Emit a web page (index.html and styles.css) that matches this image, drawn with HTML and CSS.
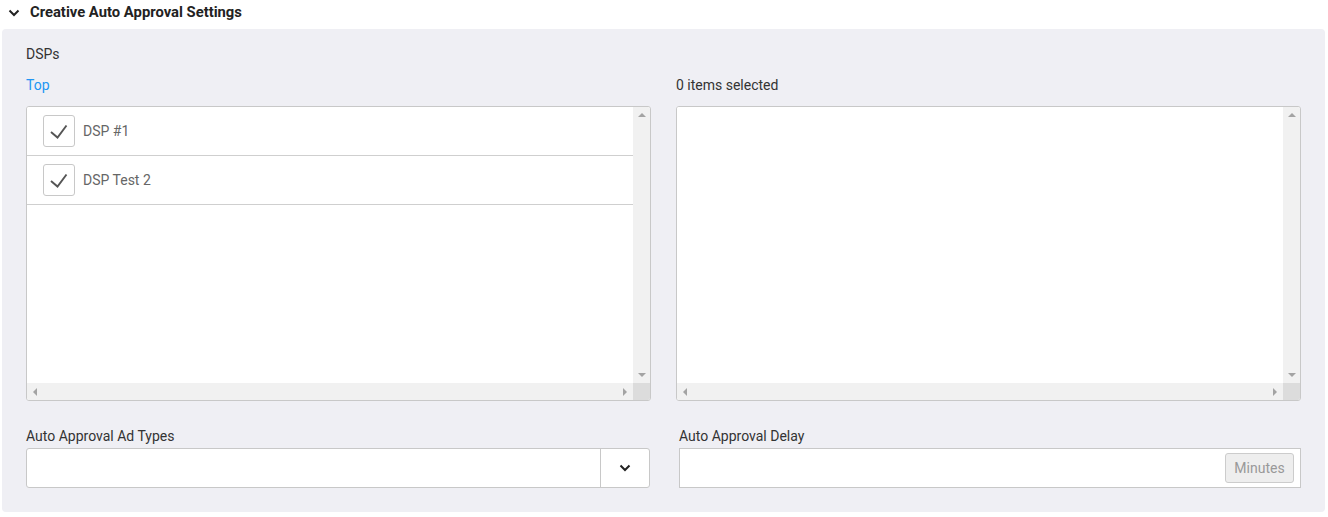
FILE: index.html
```html
<!DOCTYPE html>
<html>
<head>
<meta charset="utf-8">
<link rel="stylesheet" href="styles.css">
</head>
<body>
<div class="section">
  <div class="section-head">
    <svg class="chev" width="12" height="8" viewBox="0 0 12 8"><path d="M1.5 1.5 L6 6 L10.5 1.5" fill="none" stroke="#222" stroke-width="2"/></svg>
    <span class="section-title">Creative Auto Approval Settings</span>
  </div>
  <div class="panel">
    <div class="field-title">DSPs</div>
    <div class="dual">
      <div class="col">
        <div class="col-head link">Top</div>
        <div class="listbox">
          <div class="list-view">
            <div class="row">
              <span class="check"><svg width="32" height="32" viewBox="0 0 32 32"><path d="M8 17 L14.5 22.5 L23.5 10.5" fill="none" stroke="#555" stroke-width="1.9"/></svg></span>
              <span class="row-label">DSP #1</span>
            </div>
            <div class="row">
              <span class="check"><svg width="32" height="32" viewBox="0 0 32 32"><path d="M8 17 L14.5 22.5 L23.5 10.5" fill="none" stroke="#555" stroke-width="1.9"/></svg></span>
              <span class="row-label">DSP Test 2</span>
            </div>
          </div>
          <div class="vbar"><span class="arr up"></span><span class="arr down"></span></div>
          <div class="hbar"><span class="arr left"></span><span class="arr right"></span></div>
          <div class="corner"></div>
        </div>
      </div>
      <div class="col">
        <div class="col-head">0 items selected</div>
        <div class="listbox">
          <div class="list-view"></div>
          <div class="vbar"><span class="arr up"></span><span class="arr down"></span></div>
          <div class="hbar"><span class="arr left"></span><span class="arr right"></span></div>
          <div class="corner"></div>
        </div>
      </div>
    </div>
    <div class="bottom">
      <div class="bcol left">
        <div class="label">Auto Approval Ad Types</div>
        <div class="select">
          <div class="select-value"></div>
          <div class="select-btn"><svg width="12" height="8" viewBox="0 0 12 8"><path d="M1.5 1.5 L6 6 L10.5 1.5" fill="none" stroke="#222" stroke-width="2"/></svg></div>
        </div>
      </div>
      <div class="bcol right">
        <div class="label">Auto Approval Delay</div>
        <div class="input">
          <span class="addon">Minutes</span>
        </div>
      </div>
    </div>
  </div>
</div>
</body>
</html>
```
FILE: styles.css
```css
* { box-sizing: border-box; }
html, body { margin: 0; padding: 0; background: #fff; }
body {
  font-family: Roboto, "Liberation Sans", Arial, sans-serif;
  font-size: 14px;
  color: #333;
}
.section { padding: 0 3px 0 2px; }
.section-head {
  display: flex;
  align-items: center;
  height: 24px;
  padding-left: 6px;
}
.chev { margin-right: 10px; margin-top: 1px; }
.section-title {
  font-size: 14.8px;
  font-weight: 700;
  color: #222;
}
.panel {
  margin-top: 5px;
  background: #efeff4;
  border-radius: 4px;
  padding: 15px 24px 24px 24px;
}
.field-title { line-height: 20px; }
.dual {
  display: grid;
  grid-template-columns: 1fr 1fr;
  column-gap: 25px;
  margin-top: 11px;
}
.col-head { line-height: 20px; margin-bottom: 11px; }
.link { color: #2196f3; }
.listbox {
  height: 295px;
  background: #fff;
  border: 1px solid #c8c8c8;
  border-radius: 3px;
  display: grid;
  grid-template-columns: 1fr 17px;
  grid-template-rows: 1fr 17px;
  overflow: hidden;
}
.list-view { background: #fff; }
.row {
  display: flex;
  align-items: center;
  height: 49px;
  border-bottom: 1px solid #cfcfcf;
  padding-left: 16px;
}
.check {
  width: 32px;
  height: 32px;
  border: 1px solid #c8c8c8;
  border-radius: 3px;
  background: #fff;
  display: block;
  margin-right: 8px;
}
.check svg { display: block; margin: -1px 0 0 -1px; }
.row-label { color: #666; }
.vbar {
  background: #f1f1f1;
  display: flex;
  flex-direction: column;
  justify-content: space-between;
  align-items: center;
  padding: 6px 0 6px 0;
}
.hbar {
  background: #f1f1f1;
  display: flex;
  justify-content: space-between;
  align-items: center;
  padding: 0 6px 0 6px;
}
.corner { background: #dcdcdc; }
.arr { width: 0; height: 0; display: block; }
.arr.up { border-left: 4px solid transparent; border-right: 4px solid transparent; border-bottom: 4px solid #a3a3a3; }
.arr.down { border-left: 4px solid transparent; border-right: 4px solid transparent; border-top: 4px solid #a3a3a3; }
.arr.left { border-top: 4px solid transparent; border-bottom: 4px solid transparent; border-right: 4px solid #a3a3a3; }
.arr.right { border-top: 4px solid transparent; border-bottom: 4px solid transparent; border-left: 4px solid #a3a3a3; }
.bottom {
  display: grid;
  grid-template-columns: 1fr 1fr;
  column-gap: 25px;
  margin-top: 25px;
}
.bcol.left { padding-right: 1px; }
.bcol.right { padding-left: 3px; }
.label { line-height: 20px; margin-bottom: 2px; }
.select {
  display: flex;
  height: 40px;
  background: #fff;
  border: 1px solid #c8c8c8;
  border-radius: 3px;
}
.select-value { flex: 1; }
.select-btn {
  width: 49px;
  border-left: 1px solid #c8c8c8;
  display: flex;
  align-items: center;
  justify-content: center;
}
.input {
  height: 40px;
  background: #fff;
  border: 1px solid #c8c8c8;
  display: flex;
  justify-content: flex-end;
  align-items: center;
  padding-right: 6px;
}
.addon {
  width: 69px;
  height: 30px;
  background: #eee;
  border: 1px solid #ccc;
  border-radius: 3px;
  color: #999;
  display: flex;
  align-items: center;
  justify-content: center;
}
```
